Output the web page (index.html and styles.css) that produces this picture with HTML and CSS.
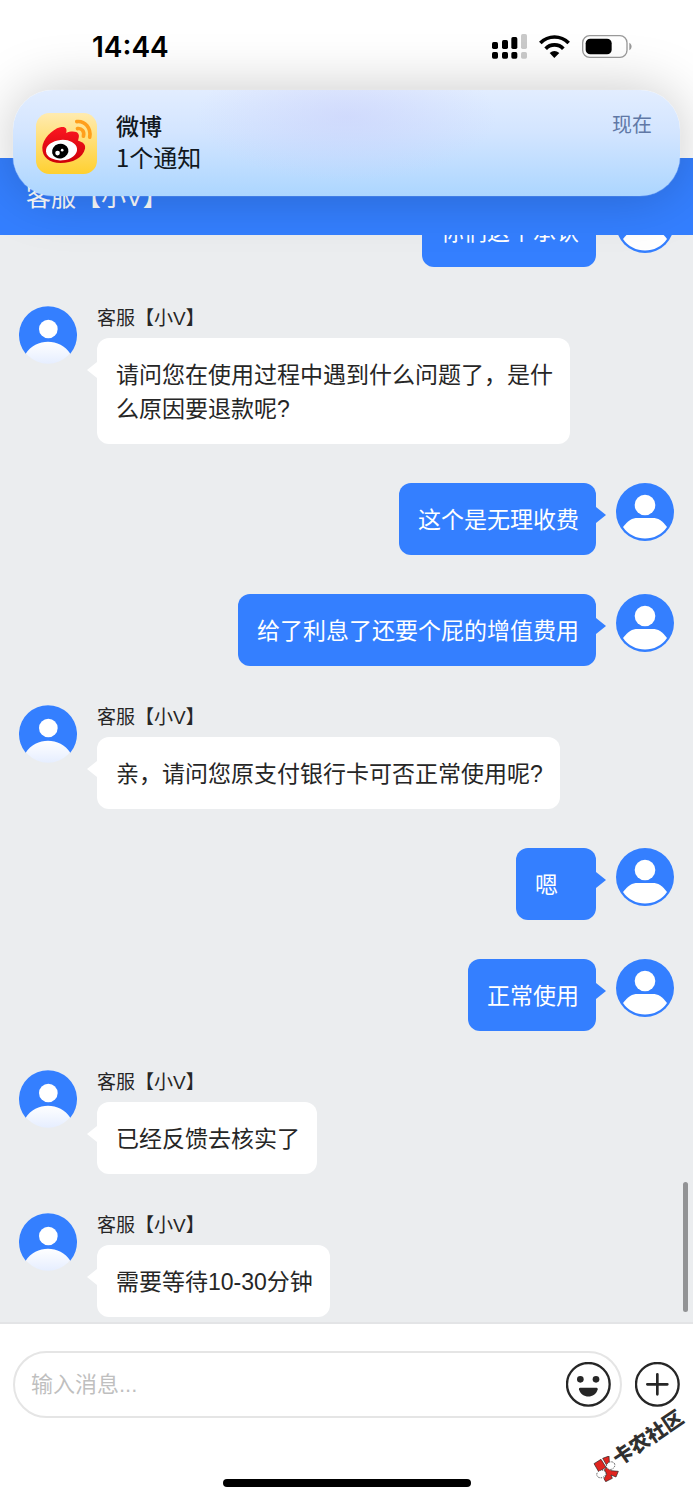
FILE: index.html
```html
<!DOCTYPE html>
<html lang="zh-CN">
<head>
<meta charset="utf-8">
<meta name="viewport" content="width=device-width, initial-scale=1">
<title>客服【小V】</title>
<link rel="stylesheet" href="styles.css">
</head>
<body>
<svg class="defs" aria-hidden="true">
  <defs>
    <linearGradient id="fade" x1="0" y1="0.6" x2="0" y2="1"><stop offset="0" stop-color="#fff"/><stop offset="1" stop-color="#e6eeff"/></linearGradient>
    <symbol id="agent" viewBox="0 0 174 174">
      <circle cx="87" cy="87" r="86" fill="url(#fade)"/>
      <path d="M20 143A87 87 0 1 1 154 143C124 95 50 95 20 143Z" fill="#347fff"/>
      <circle cx="88" cy="69" r="28" fill="#fff"/>
    </symbol>
    <symbol id="user" viewBox="0 0 174 174">
      <circle cx="87" cy="87" r="87" fill="#347fff"/>
      <circle cx="87" cy="66" r="31" fill="#fff"/>
      <path d="M21 132C37 112 48 105 65 105H109C127 105 138 112 153 132C123 178 51 178 21 132Z" fill="#fff"/>
    </symbol>
  </defs>
</svg>
<div class="app">
  <div class="status">
    <time class="clock">14:44</time>
    <div class="indicators">
      <svg width="35" height="25" viewBox="0 0 105 75" aria-label="信号">
        <rect x="0" y="24" width="18" height="21" rx="5"/><rect x="30" y="18" width="18" height="27" rx="5"/><rect x="58" y="9" width="18" height="36" rx="5"/>
        <rect x="0" y="54" width="18" height="20" rx="5"/><rect x="30" y="54" width="18" height="20" rx="5"/><rect x="58" y="54" width="18" height="20" rx="5"/>
        <g fill="#cacaca"><rect x="87" y="0" width="18" height="45" rx="5"/><rect x="87" y="54" width="18" height="20" rx="5"/></g>
      </svg>
      <svg width="31" height="23" viewBox="0 0 93 69" aria-label="无线网络">
        <g fill="none" stroke="#000" stroke-width="11"><path d="M4 24C28 0 65 0 89 24"/><path d="M20 41C34 26 59 26 73 41"/></g>
        <path d="M32 54Q46 42 61 54L46 69Z"/>
      </svg>
      <svg width="50" height="23" viewBox="0 0 150 69" aria-label="电池">
        <rect x="2" y="2" width="133" height="65" rx="21" fill="none" stroke="#9a9a9a" stroke-width="4"/>
        <rect x="11" y="11" width="78" height="47" rx="14"/><path d="M142 23C151 28 151 41 142 46Z" fill="#9a9a9a"/>
      </svg>
    </div>
  </div>
  <header class="header"><h1 class="title">客服【小V】</h1></header>

  <main class="chat">
    <div class="row mine"><p class="bubble">你们这个承认</p><svg class="avatar"><use href="#user"/></svg></div>
    <div class="row"><svg class="avatar"><use href="#agent"/></svg><div class="body"><div class="name">客服【小V】</div><p class="bubble">请问您在使用过程中遇到什么问题了，是什么原因要退款呢?</p></div></div>
    <div class="row mine"><p class="bubble">这个是无理收费</p><svg class="avatar"><use href="#user"/></svg></div>
    <div class="row mine"><p class="bubble">给了利息了还要个屁的增值费用</p><svg class="avatar"><use href="#user"/></svg></div>
    <div class="row"><svg class="avatar"><use href="#agent"/></svg><div class="body"><div class="name">客服【小V】</div><p class="bubble">亲，请问您原支付银行卡可否正常使用呢?</p></div></div>
    <div class="row mine"><p class="bubble">嗯</p><svg class="avatar"><use href="#user"/></svg></div>
    <div class="row mine"><p class="bubble">正常使用</p><svg class="avatar"><use href="#user"/></svg></div>
    <div class="row"><svg class="avatar"><use href="#agent"/></svg><div class="body"><div class="name">客服【小V】</div><p class="bubble">已经反馈去核实了</p></div></div>
    <div class="row"><svg class="avatar"><use href="#agent"/></svg><div class="body"><div class="name">客服【小V】</div><p class="bubble">需要等待10-30分钟</p></div></div>
    <div class="scrollbar"></div>
  </main>

  <footer class="composer">
    <form class="bar">
      <div class="field">
        <input class="input" type="text" placeholder="输入消息..." aria-label="输入消息">
        <button class="round" type="button" aria-label="表情">
          <svg width="45" height="45" viewBox="0 0 135 135">
            <circle cx="67" cy="67" r="64" fill="none" stroke="#262626" stroke-width="7"/>
            <g fill="#262626"><circle cx="43" cy="52" r="10"/><circle cx="90" cy="52" r="10"/><path d="M42 77H92Q96 77 95 82C88 111 46 111 39 82Q38 77 42 77Z"/></g>
          </svg>
        </button>
      </div>
      <button class="round" type="button" aria-label="更多">
        <svg width="45" height="45" viewBox="0 0 135 135"><g fill="none" stroke="#262626"><circle cx="67" cy="67" r="64" stroke-width="7"/><path d="M67 37V97M37 67H97" stroke-width="8" stroke-linecap="round"/></g></svg>
      </button>
    </form>
    <div class="home"></div>
  </footer>

  <aside class="notice">
    <svg class="notice-icon" viewBox="0 0 184 184" aria-hidden="true">
      <defs>
        <linearGradient id="tile" x1="0" y1="0" x2="0" y2="1"><stop offset="0" stop-color="#ffebb0"/><stop offset="1" stop-color="#ffd030"/></linearGradient>
        <linearGradient id="flame" x1="0" y1="0" x2="0" y2="1"><stop offset="0" stop-color="#fb1721"/><stop offset="1" stop-color="#ce0008"/></linearGradient>
      </defs>
      <rect width="184" height="184" rx="40" fill="url(#tile)"/>
      <path d="M19 104C20 80 48 49 73 43C88 39 95 46 91 60C105 54 123 54 128 63C132 70 127 78 127 84C141 88 150 94 148 107C142 135 110 151 74 151C42 151 18 134 19 104Z" fill="url(#flame)"/>
      <ellipse cx="77" cy="112" rx="47" ry="31" fill="#fff" transform="rotate(-5 77 112)"/>
      <ellipse cx="73" cy="115" rx="25" ry="22" fill="#000" transform="rotate(-15 73 115)"/>
      <circle cx="65" cy="121" r="7" fill="#fff"/><circle cx="79" cy="112" r="4" fill="#fff"/>
      <g fill="none" stroke="#ff9f1c" stroke-width="11" stroke-linecap="round"><path d="M123 26C148 23 167 46 162 73"/><path d="M125 47C138 45 147 56 143 70"/></g>
    </svg>
    <div class="notice-text"><strong class="notice-app">微博</strong><span class="notice-body">1个通知</span></div>
    <span class="notice-time">现在</span>
  </aside>

  <div class="mark">
    <svg class="mark-logo" width="28" height="26" viewBox="0 0 84 78" aria-hidden="true">
      <g stroke="#222" stroke-width="2">
        <g fill="#e0251f"><path d="M3 23L24 10L39 34L17 47Z"/><path d="M29 7L48 0L49 16L41 28Z"/><path d="M34 41L44 32L54 44L76 46L69 63L54 57L58 67L38 77L33 68L41 55Z"/></g>
        <g fill="#fff" stroke-dasharray="4 3"><ellipse cx="53" cy="29" rx="13" ry="11" transform="rotate(-30 53 29)"/><ellipse cx="25" cy="54" rx="14" ry="11" transform="rotate(-20 25 54)"/></g>
      </g>
    </svg>
    <span class="mark-text">卡农社区</span>
  </div>
</div>
</body>
</html>
```

FILE: styles.css
```css
* { box-sizing: border-box; }

body {
  margin: 0;
  background: #fff;
  color: #262626;
  font-family: "Liberation Sans", "Noto Sans CJK SC", sans-serif;
  font-weight: 400;
}

.defs { position: absolute; width: 0; height: 0; }

.app {
  position: relative;
  display: flex;
  flex-direction: column;
  height: 100vh;
  overflow: hidden;
}

.status {
  display: flex;
  justify-content: space-between;
  align-items: flex-start;
  flex: none;
  height: 158px;
  padding: 26px 61px 0 92px;
  color: #000;
}

.clock { font: 600 28px/42px Inter, sans-serif; }

.indicators { display: flex; align-items: center; gap: 12px; height: 41px; }

.header {
  flex: none;
  display: flex;
  align-items: center;
  height: 77px;
  padding: 0 26px;
  background: #347fff;
}

.title { margin: 0; color: #fff; font-size: 25px; font-weight: 400; line-height: 38px; }

.chat {
  position: relative;
  flex: 1;
  min-height: 0;
  display: flex;
  flex-direction: column;
  justify-content: flex-end;
  gap: 39px;
  padding: 0 19px 5px;
  overflow: hidden;
  background: #ebedef;
}

.row { display: flex; align-items: flex-start; gap: 20px; flex: none; }
.mine { justify-content: flex-end; }

.avatar { flex: none; width: 58px; height: 58px; }

.body { display: flex; flex-direction: column; align-items: flex-start; margin-right: 104px; }

.name { height: 32px; font-size: 19px; line-height: 26px; }

.bubble {
  position: relative;
  min-width: 80px;
  margin: 0;
  padding: 20px 17px 18px 19px;
  border-radius: 12px;
  background: #fff;
  font-size: 23px;
  line-height: 34px;
}

.bubble::before {
  content: "";
  position: absolute;
  top: 24px;
  left: -10px;
  border: 8px solid transparent;
  border-width: 8px 10px 8px 0;
  border-right-color: #fff;
}

.mine .bubble { background: #347fff; color: #fff; }

.mine .bubble::before {
  left: auto;
  right: -10px;
  border-width: 8px 0 8px 10px;
  border-left-color: #347fff;
}

.scrollbar {
  position: absolute;
  right: 5px;
  bottom: 10px;
  width: 5px;
  height: 130px;
  border-radius: 3px;
  background: #929395;
}

.composer {
  flex: none;
  display: flex;
  flex-direction: column;
  justify-content: space-between;
  height: 178px;
  padding: 27px 13px 13px;
  border-top: 2px solid #e3e4e6;
  background: #fff;
}

.bar { display: flex; align-items: center; gap: 13px; }

.field {
  flex: 1;
  display: flex;
  align-items: center;
  min-width: 0;
  height: 67px;
  padding: 0 9px 0 16px;
  border: 2px solid #e5e5e5;
  border-radius: 34px;
}

.input {
  flex: 1;
  min-width: 0;
  padding: 0;
  border: 0;
  outline: 0;
  background: none;
  color: #262626;
  font: inherit;
  font-size: 22px;
  line-height: 34px;
}

.input::placeholder { color: #bfbfbf; opacity: 1; }

.round { flex: none; display: flex; padding: 0; border: 0; border-radius: 50%; background: none; }

.home { align-self: center; width: 248px; height: 8px; border-radius: 4px; background: #000; }

.notice {
  position: absolute;
  top: 90px;
  left: 13px;
  right: 13px;
  display: flex;
  align-items: flex-start;
  gap: 19px;
  height: 106px;
  padding: 23px 28px 0 23px;
  border-radius: 40px;
  background:
    radial-gradient(ellipse 150px 65px at 50% 25%, rgba(200, 205, 250, 0.5), transparent),
    linear-gradient(#e2edff, #d3e5ff 40%, #acd6ff);
  box-shadow: 0 0 1px #fff, 0 0 56px rgba(0, 0, 0, 0.22);
  color: #111820;
}

.notice-icon { flex: none; width: 61px; height: 61px; }

.notice-text { flex: 1; display: flex; flex-direction: column; font-size: 23px; line-height: 29px; }
.notice-app { font-weight: 500; }
.notice-body { font-family: "Noto Sans CJK SC", sans-serif; font-size: 24px; font-weight: 400; }

.notice-time { color: #6078a6; font-size: 20px; font-weight: 400; line-height: 24px; }

.mark {
  position: absolute;
  right: 2px;
  bottom: 18px;
  display: flex;
  align-items: flex-end;
  width: 98px;
  height: 74px;
}

.mark-logo { flex: none; }

.mark-text {
  position: absolute;
  left: 15px;
  top: 16px;
  color: #303030;
  font-size: 20px;
  font-weight: 900;
  line-height: 28px;
  white-space: nowrap;
  transform: rotate(-34deg);
}
```
